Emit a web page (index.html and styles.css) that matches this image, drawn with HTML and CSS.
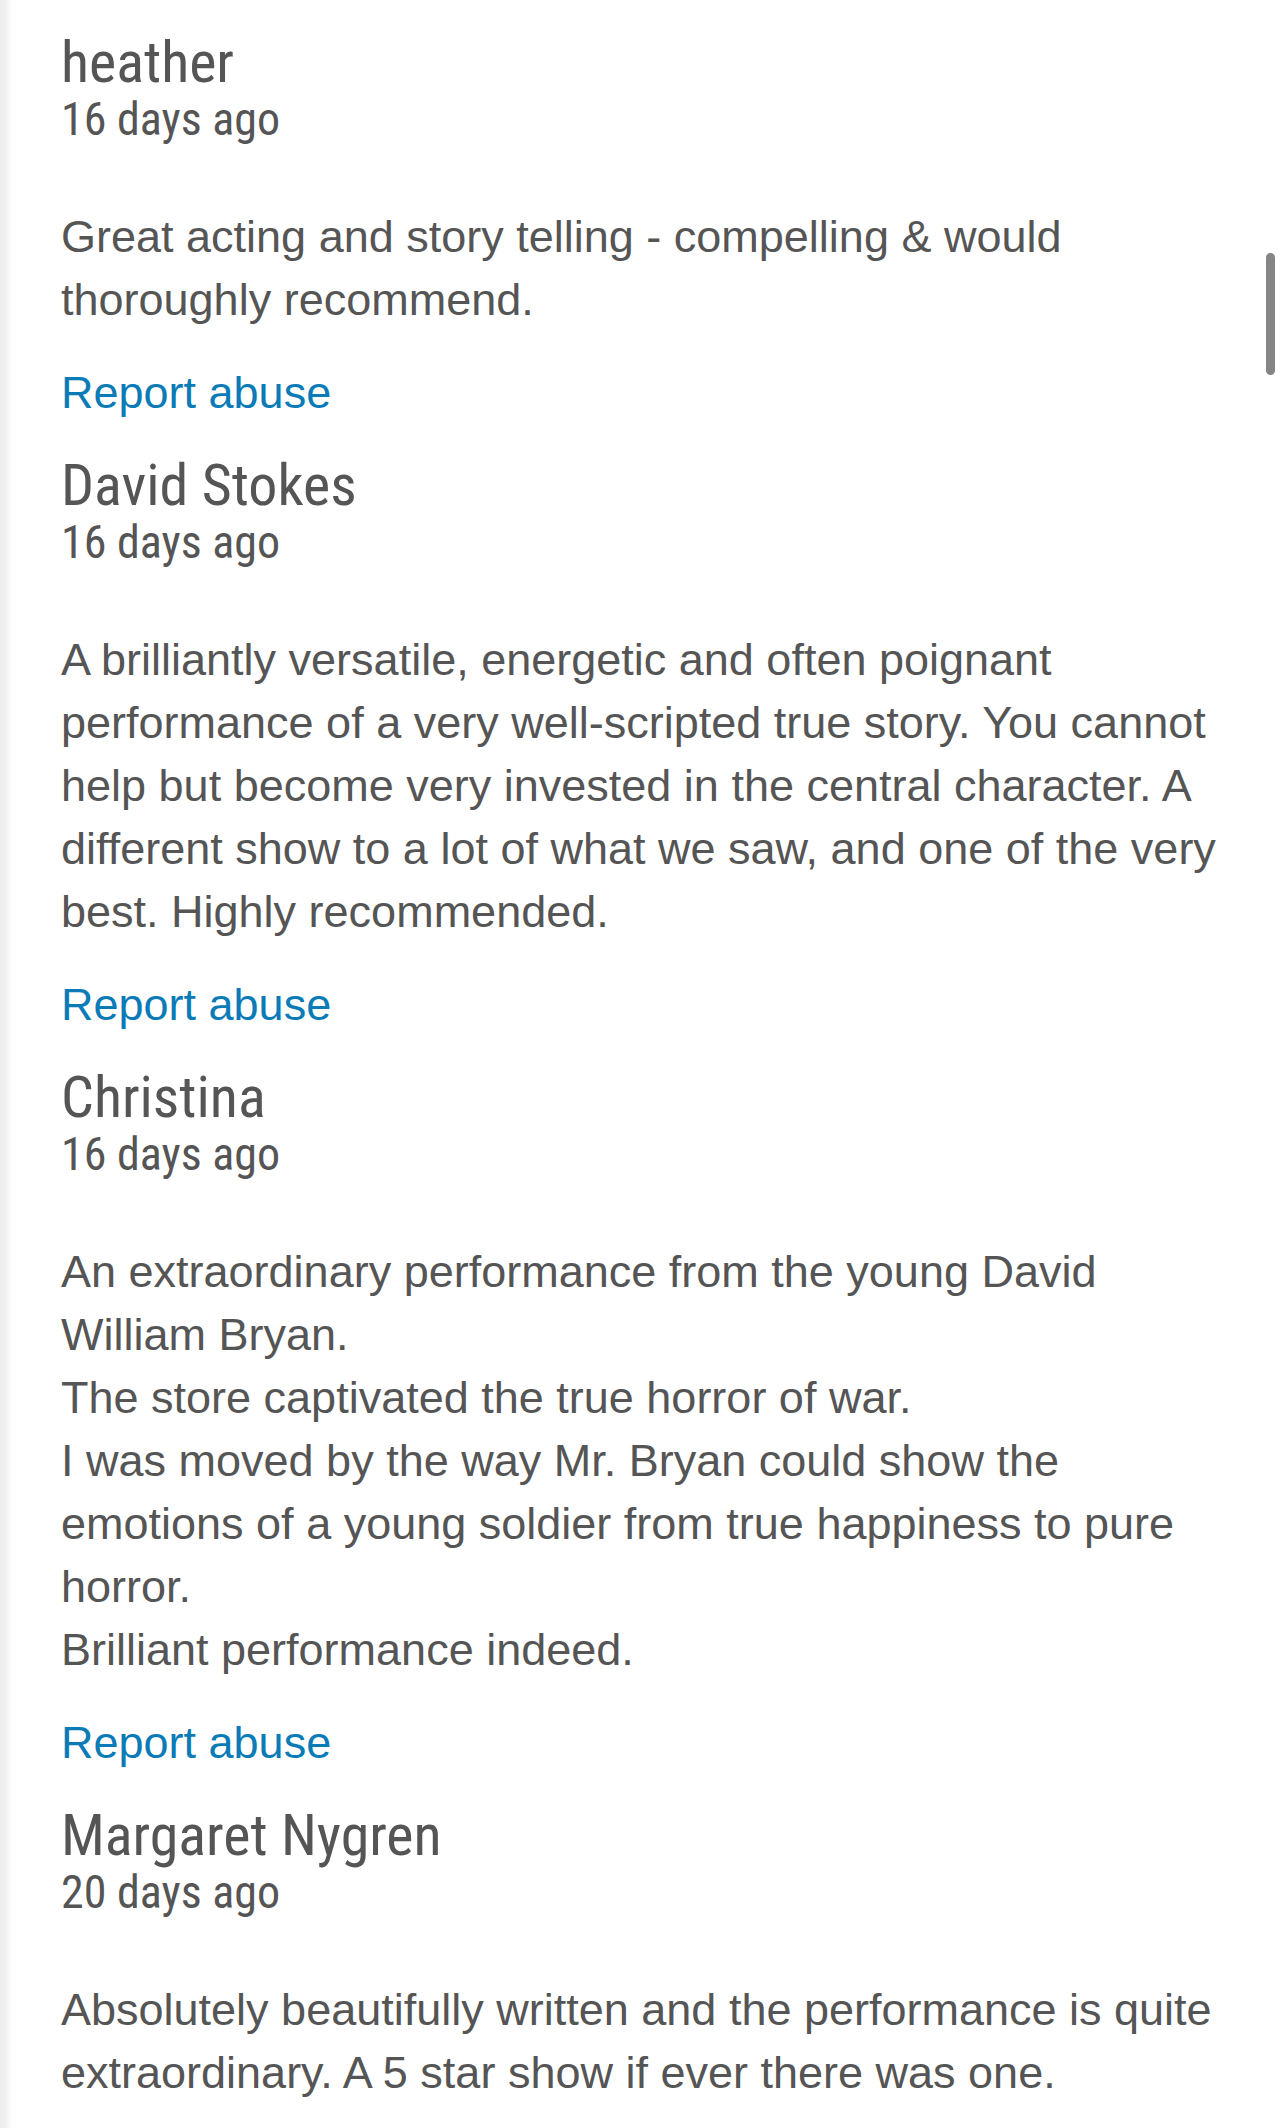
FILE: index.html
```html
<!DOCTYPE html>
<html lang="en">
<head>
<meta charset="utf-8">
<title>Reviews</title>
<link rel="stylesheet" href="styles.css">
</head>
<body>
<main class="reviews">
  <article class="review">
    <h3 class="review-name">heather</h3>
    <div class="review-date">16 days ago</div>
    <p class="review-body">Great acting and story telling - compelling &amp; would thoroughly recommend.</p>
    <a class="review-report" href="#">Report abuse</a>
  </article>
  <article class="review">
    <h3 class="review-name">David Stokes</h3>
    <div class="review-date">16 days ago</div>
    <p class="review-body">A brilliantly versatile, energetic and often poignant performance of a very well-scripted true story. You cannot help but become very invested in the central character. A different show to a lot of what we saw, and one of the very best. Highly recommended.</p>
    <a class="review-report" href="#">Report abuse</a>
  </article>
  <article class="review">
    <h3 class="review-name">Christina</h3>
    <div class="review-date">16 days ago</div>
    <p class="review-body">An extraordinary performance from the young David William Bryan.<br>The store captivated the true horror of war.<br>I was moved by the way Mr. Bryan could show the emotions of a young soldier from true happiness to pure horror.<br>Brilliant performance indeed.</p>
    <a class="review-report" href="#">Report abuse</a>
  </article>
  <article class="review">
    <h3 class="review-name">Margaret Nygren</h3>
    <div class="review-date">20 days ago</div>
    <p class="review-body">Absolutely beautifully written and the performance is quite extraordinary. A 5 star show if ever there was one.</p>
  </article>
</main>
<div class="scroll-thumb"></div>
</body>
</html>
```

FILE: styles.css
```css
html, body {
  margin: 0;
  padding: 0;
}

body {
  width: 1284px;
  height: 2128px;
  overflow: hidden;
  background: linear-gradient(to right, #ececec 0, #f2f2f2 6px, #fbfbfb 10px, #ffffff 13px);
  color: #555555;
  font-family: "Liberation Sans", Arial, sans-serif;
}

.reviews {
  padding: 32px 52px 0 61px;
}

.review {
  display: block;
}

.review + .review {
  margin-top: 31px;
}

.review-name {
  margin: 0;
  font-family: "Roboto Condensed", Roboto, "Liberation Sans", sans-serif;
  font-weight: 400;
  font-size: 58px;
  line-height: 61px;
  color: #555555;
}

.review-date {
  font-family: "Roboto Condensed", Roboto, "Liberation Sans", sans-serif;
  font-size: 46px;
  line-height: 53px;
  color: #555555;
}

.review-body {
  margin: 59px 0 0 0;
  font-size: 45px;
  line-height: 63px;
  color: #555555;
}

.review-report {
  display: block;
  margin-top: 30px;
  font-size: 45px;
  line-height: 63px;
  color: #0a7bb6;
  text-decoration: none;
}

.scroll-thumb {
  position: absolute;
  left: 1266px;
  top: 253px;
  width: 9px;
  height: 122px;
  border-radius: 5px;
  background: #858585;
}
```
